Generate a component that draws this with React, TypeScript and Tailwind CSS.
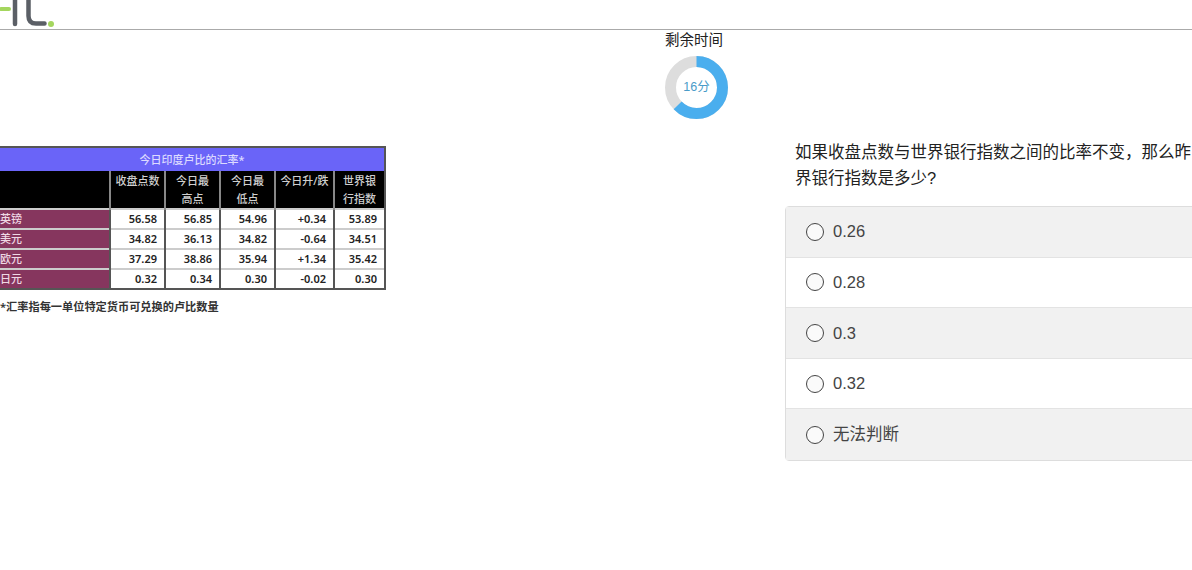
const sans = "font-['Liberation_Sans','Noto_Sans_CJK_SC',sans-serif]";

const rows = [
  { name: "英镑", vals: ["56.58", "56.85", "54.96", "+0.34", "53.89"] },
  { name: "美元", vals: ["34.82", "36.13", "34.82", "-0.64", "34.51"] },
  { name: "欧元", vals: ["37.29", "38.86", "35.94", "+1.34", "35.42"] },
  { name: "日元", vals: ["0.32", "0.34", "0.30", "-0.02", "0.30"] },
];

const heads = [["收盘点数"], ["今日最", "高点"], ["今日最", "低点"], ["今日升/跌"], ["世界银", "行指数"]];
const options = ["0.26", "0.28", "0.3", "0.32", "无法判断"];

const Logo = () => (
  <svg width="60" height="29" viewBox="0 0 60 29" className="block">
    <path d="M1 9 H9" stroke="#a4d65e" strokeWidth="4" strokeLinecap="round" fill="none" />
    <path d="M15 0 V24" stroke="#5b5f66" strokeWidth="4.5" strokeLinecap="round" fill="none" />
    <path d="M28.5 0 V16 Q28.5 23.5 36 23.5 H44.5" stroke="#5b5f66" strokeWidth="4.5" strokeLinecap="round" fill="none" />
    <circle cx="51" cy="24" r="3" fill="#a4d65e" />
  </svg>
);

const Timer = () => (
  <div className="flex flex-col items-center">
    <div className="text-[14.5px] leading-[20px] text-[#222]">剩余时间</div>
    <div className="relative mt-[6px] ml-[5px] w-[63px] h-[63px]">
      <svg width="63" height="63" viewBox="0 0 63 63" className="block">
        <circle cx="31.5" cy="31.5" r="26" fill="none" stroke="#dddddd" strokeWidth="11" />
        <circle
          cx="31.5"
          cy="31.5"
          r="26"
          fill="none"
          stroke="#4aaeee"
          strokeWidth="11"
          strokeDasharray="102.1 163.4"
          transform="rotate(-90 31.5 31.5)"
        />
      </svg>
      <div className="absolute inset-0 flex items-center justify-center text-[12.5px] text-[#4a9cc9]">16分</div>
    </div>
  </div>
);

const RateTable = () => (
  <div className="font-['Noto_Sans','Noto_Sans_CJK_SC',sans-serif] font-medium">
    <table className="table-fixed border-collapse w-[385px] text-[11px] border-y-2 border-r-2 border-[#555]">
      <colgroup>
        <col className="w-[110px]" />
        <col className="w-[55px]" />
        <col className="w-[55px]" />
        <col className="w-[55px]" />
        <col className="w-[59px]" />
        <col className="w-[51px]" />
      </colgroup>
      <thead>
        <tr className="h-[24px] bg-[#6a64f8] text-[#dcdaff]">
          <th colSpan={6} className="font-medium text-center pt-[2px]">今日印度卢比的汇率*</th>
        </tr>
        <tr className="h-[38px] bg-black text-[#cfcfcf]">
          <th className="border-r-2 border-[#888]"></th>
          {heads.map((h) => (
            <th key={h[0]} className="border-r-2 last:border-r-0 border-[#888] font-medium align-top pt-[1px] leading-[18px]">
              {h.map((line) => (
                <div key={line}>{line}</div>
              ))}
            </th>
          ))}
        </tr>
      </thead>
      <tbody>
        {rows.map((r) => (
          <tr key={r.name} className="h-[20px] border-t-2 border-[#ccc] leading-[16px]">
            <td className="bg-[#86365e] text-[#efd8e4] border-r-2 border-[#555] p-0">{r.name}</td>
            {r.vals.map((v, i) => (
              <td key={i} className="bg-white text-right pr-[7px] border-r-2 border-[#555] text-[#222] text-[11px] font-semibold p-0">
                {v}
              </td>
            ))}
          </tr>
        ))}
      </tbody>
    </table>
    <div className="mt-[9px] text-[11.2px] leading-[16px] text-[#333] font-semibold">*汇率指每一单位特定货币可兑换的卢比数量</div>
  </div>
);

const Radio = () => (
  <span className="block w-[18px] h-[18px] rounded-full border border-[#444] bg-[#fafafa] shrink-0" />
);

export default function App() {
  return (
    <div className={`w-[1192px] h-[570px] overflow-hidden bg-white ${sans}`}>
      <div className="w-[1388px]">
        <div className="h-[30px] border-b border-[#aaa]">
          <Logo />
        </div>
        <Timer />
        <div className="flex">
          <div className="w-[785px] shrink-0 pt-[27px]">
            <RateTable />
          </div>
          <div className="w-[600px] shrink-0 pt-[20px]">
            <div className="pl-[10px] text-[16.5px] leading-[26px] text-[#222] whitespace-nowrap">
              <div>如果收盘点数与世界银行指数之间的比率不变，那么昨日世</div>
              <div>界银行指数是多少?</div>
            </div>
            <div className="mt-[15px] rounded-[4px] border border-[#ddd] text-[#444] text-[16.5px]">
              {options.map((o, i) => (
                <div
                  key={o}
                  className={`h-[50.6px] flex items-center pl-[20px] gap-[9px] border-b last:border-b-0 border-[#e3e3e3] ${i % 2 === 0 ? "bg-[#f1f1f1]" : "bg-white"}`}
                >
                  <Radio />
                  <span>{o}</span>
                </div>
              ))}
            </div>
          </div>
        </div>
      </div>
    </div>
  );
}
